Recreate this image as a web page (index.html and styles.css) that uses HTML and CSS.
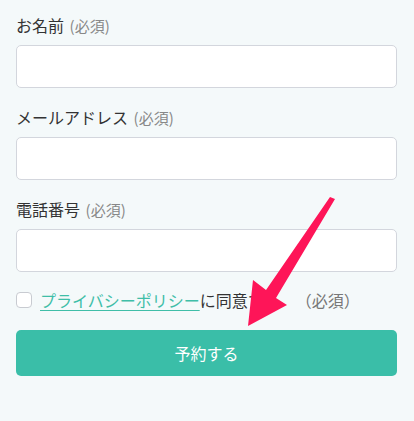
FILE: index.html
```html
<!DOCTYPE html>
<html lang="ja">
<head>
<meta charset="utf-8">
<link rel="stylesheet" href="styles.css">
</head>
<body>
<form class="form">
  <div class="field">
    <label class="label">お名前 <span class="req">(必須)</span></label>
    <input class="input" type="text">
  </div>
  <div class="field">
    <label class="label">メールアドレス <span class="req">(必須)</span></label>
    <input class="input" type="text">
  </div>
  <div class="field">
    <label class="label">電話番号 <span class="req">(必須)</span></label>
    <input class="input" type="text">
  </div>
  <div class="agree">
    <span class="check"></span>
    <span class="agree-text"><a class="link">プライバシーポリシー</a>に同意する</span>
    <span class="agree-req">（必須）</span>
  </div>
  <button class="submit" type="button">予約する</button>
</form>
<svg class="arrow" width="414" height="421" viewBox="0 0 414 421">
  <polygon points="330,197 335,199 276,298 287,305 248,326 253,280 266,290" fill="#fe1558"/>
</svg>
</body>
</html>
```

FILE: styles.css
```css
html, body {
  margin: 0;
  padding: 0;
}
body {
  width: 414px;
  height: 421px;
  background: #f4f9fa;
  font-family: "Noto Sans CJK JP", "Noto Sans", sans-serif;
  color: #333;
  position: relative;
  overflow: hidden;
}
.form {
  padding: 13px 17px 0 16px;
  display: flex;
  flex-direction: column;
}
.field {
  display: flex;
  flex-direction: column;
  margin-bottom: 17px;
}
.label {
  font-size: 16px;
  line-height: 24px;
  height: 24px;
  margin-bottom: 8px;
  color: #333;
}
.req {
  font-size: 15px;
  color: #888;
  margin-left: 2px;
}
.input {
  box-sizing: border-box;
  height: 43px;
  width: 100%;
  border: 1px solid #d3d6dd;
  border-radius: 5px;
  background: #fff;
  margin: 0;
}
.agree {
  display: flex;
  align-items: center;
  height: 24px;
  margin-top: -1px;
  margin-bottom: 18px;
  font-size: 16px;
  line-height: 24px;
}
.check {
  box-sizing: border-box;
  width: 16px;
  height: 16px;
  border: 1px solid #c8cbd1;
  border-radius: 4px;
  background: #fff;
  margin-right: 8px;
}
.link {
  color: #3fbea8;
  text-decoration: underline;
  text-underline-offset: 3px;
}
.agree-text {
  color: #333;
}
.agree-req {
  color: #777;
  margin-left: 16px;
}
.submit {
  height: 46px;
  width: 100%;
  border: none;
  border-radius: 5px;
  background: #3abea8;
  color: #fff;
  font-family: "Noto Sans CJK JP", "Noto Sans", sans-serif;
  font-size: 16px;
  margin: 0;
}
.arrow {
  position: absolute;
  left: 0;
  top: 0;
}
```
